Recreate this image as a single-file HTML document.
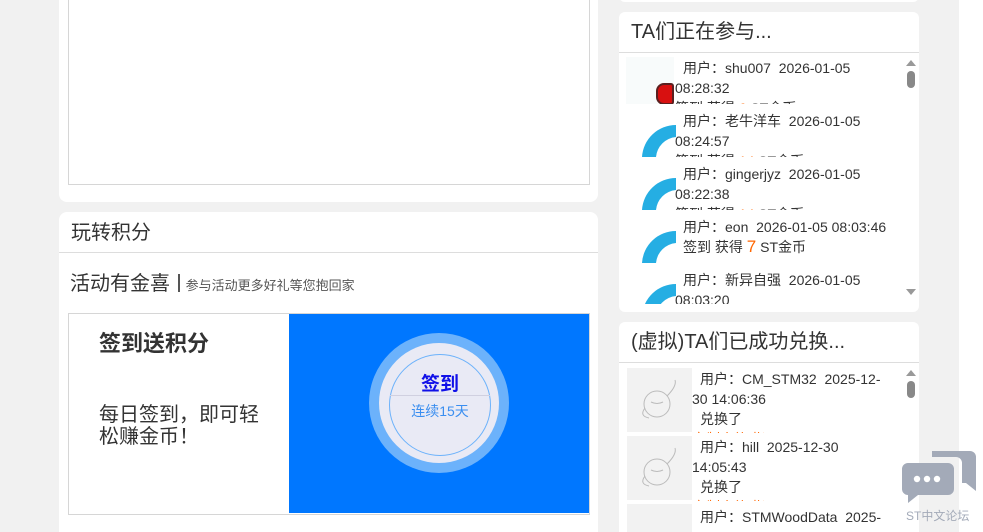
<!DOCTYPE html>
<html style="width:983px;height:532px;overflow:hidden"><head><meta charset="utf-8"><style>
*{margin:0;padding:0;box-sizing:border-box}
body{width:983px;height:532px;overflow:hidden;background:#fff;font-family:"Liberation Sans","Noto Sans CJK SC",sans-serif;color:#333;position:relative}
.bg{position:absolute;left:0;top:0;width:959px;height:532px;background:#f1f1f1}
.p{position:absolute;background:#fff;border-radius:8px}
.a{position:absolute}
.line{position:absolute;height:1px;background:#ddd}
.it{position:absolute;overflow:hidden;font-size:14px;line-height:20px;color:#333}
.it .t{position:absolute;text-indent:8px}
.o{color:#f60}
.sb{position:absolute;width:8px;background:#888;border-radius:4px}
.up{position:absolute;width:0;height:0;border-left:5px solid transparent;border-right:5px solid transparent;border-bottom:6px solid #999}
.dn{position:absolute;width:0;height:0;border-left:5px solid transparent;border-right:5px solid transparent;border-top:6px solid #999}
</style></head><body>
<div class="bg"></div>
<div class="p" style="left:59px;top:-10px;width:539px;height:212px"></div>
<div class="a" style="left:68px;top:-2px;width:522px;height:187px;border:1px solid #d6d6d6"></div>
<div class="p" style="left:59px;top:212px;width:539px;height:320px;border-radius:8px 8px 0 0"></div>
<div class="a" style="left:71px;top:221px;font-size:20px;line-height:24px;color:#333">玩转积分</div>
<div class="line" style="left:59px;top:252px;width:539px"></div>
<div class="a" style="left:70px;top:272px;font-size:20px;line-height:24px;color:#333">活动有金喜 <span style="display:inline-block;width:2px;height:18px;background:#555;vertical-align:-2px;margin:0 6px 0 2px"></span><span style="font-size:13px;color:#555">参与活动更多好礼等您抱回家</span></div>
<div class="a" style="left:68px;top:313px;width:522px;height:202px;border:1px solid #d6d6d6"></div>
<div class="a" style="left:289px;top:314px;width:300px;height:199px;background:#0077ff"></div>
<div class="a" style="left:99px;top:330px;font-size:22px;font-weight:bold;color:#333;line-height:28px">签到送积分</div>
<div class="a" style="left:99px;top:404px;width:170px;font-size:20px;line-height:22px;color:#333">每日签到，即可轻松赚金币！</div>
<div class="a" style="left:369px;top:333px;width:140px;height:140px;border-radius:50%;background:#6cb2fb"></div>
<div class="a" style="left:379px;top:343px;width:120px;height:120px;border-radius:50%;background:#e9eaf5"></div>
<div class="a" style="left:389px;top:354px;width:102px;height:102px;border-radius:50%;border:1px solid #6cb2fb"></div>
<div class="line" style="left:390px;top:395px;width:100px;background:#d0d0e0"></div>
<div class="a" style="left:389px;top:373px;width:102px;text-align:center;font-size:19px;font-weight:bold;color:#1010e8;line-height:24px">签到</div>
<div class="a" style="left:389px;top:401px;width:102px;text-align:center;font-size:14px;color:#3a8ef0;line-height:20px">连续15天</div>

<div class="p" style="left:619px;top:-10px;width:300px;height:12px;border-radius:0 0 6px 6px"></div>
<div class="p" style="left:619px;top:12px;width:300px;height:300px;border-radius:6px"></div>
<div class="a" style="left:631px;top:20px;font-size:20px;line-height:24px;color:#333">TA们正在参与...</div>
<div class="line" style="left:619px;top:52px;width:300px"></div>
<div class="up" style="left:906px;top:60px"></div>
<div class="sb" style="left:907px;top:71px;height:17px"></div>
<div class="dn" style="left:906px;top:289px"></div>

<div class="it" style="left:626px;top:57px;width:275px;height:47px">
<div class="a" style="left:0;top:0;width:48px;height:48px;background:#f8fbfb"></div>
<div class="a" style="left:30px;top:26px;width:18px;height:22px;border-radius:8px 3px 3px 8px;background:#d81010;border:2px solid #5a2020"></div>
<div class="t" style="left:49px;top:1px;width:226px">用户：shu007&nbsp; 2026-01-05 08:28:32<br>签到 获得 <span class="o">6</span> ST金币</div></div>

<div class="it" style="left:626px;top:110px;width:275px;height:47px">
<svg class="a" style="left:16px;top:15px" width="34" height="32"><path d="M0,32 A34,34 0 0 1 34,0 L34,12 A22,22 0 0 0 14,32 Z" fill="#25aee3"/></svg>
<div class="t" style="left:49px;top:1px;width:226px">用户：老牛洋车&nbsp; 2026-01-05 08:24:57<br>签到 获得 <span class="o">14</span> ST金币</div></div>

<div class="it" style="left:626px;top:163px;width:275px;height:47px">
<svg class="a" style="left:16px;top:15px" width="34" height="32"><path d="M0,32 A34,34 0 0 1 34,0 L34,12 A22,22 0 0 0 14,32 Z" fill="#25aee3"/></svg>
<div class="t" style="left:49px;top:1px;width:226px">用户：gingerjyz&nbsp; 2026-01-05 08:22:38<br>签到 获得 <span class="o">14</span> ST金币</div></div>

<div class="it" style="left:626px;top:216px;width:275px;height:47px">
<svg class="a" style="left:16px;top:15px" width="34" height="32"><path d="M0,32 A34,34 0 0 1 34,0 L34,12 A22,22 0 0 0 14,32 Z" fill="#25aee3"/></svg>
<div class="t" style="left:49px;top:1px;width:226px">用户：eon&nbsp; 2026-01-05 08:03:46<br><span style="padding-left:8px">签到 获得 <span class="o" style="font-size:17px">7</span> ST金币</span></div></div>

<div class="it" style="left:626px;top:269px;width:275px;height:35px">
<svg class="a" style="left:16px;top:15px" width="34" height="32"><path d="M0,32 A34,34 0 0 1 34,0 L34,12 A22,22 0 0 0 14,32 Z" fill="#25aee3"/></svg>
<div class="t" style="left:49px;top:1px;width:226px">用户：新异自强&nbsp; 2026-01-05 08:03:20</div></div>

<div class="p" style="left:619px;top:322px;width:300px;height:210px;border-radius:6px 6px 0 0"></div>
<div class="a" style="left:631px;top:330px;font-size:20px;line-height:24px;color:#333">(虚拟)TA们已成功兑换...</div>
<div class="line" style="left:619px;top:362px;width:300px"></div>
<div class="up" style="left:906px;top:370px"></div>
<div class="sb" style="left:907px;top:381px;height:17px"></div>

<div class="it" style="left:627px;top:368px;width:270px;height:65px">
<div class="a" style="left:0;top:0;width:65px;height:64px;background:#f2f2f2"></div>
<svg class="a" style="left:10px;top:10px" width="45" height="45"><circle cx="20" cy="26" r="13" fill="none" stroke="#bbb"/><path d="M30,18 Q40,8 38,2 M8,30 Q2,38 12,40 M14,24 q6,3 12,0" fill="none" stroke="#bbb"/></svg>
<div class="t" style="left:65px;top:1px;width:200px">用户：CM_STM32&nbsp; 2025-12-30 14:06:36<br><span style="padding-left:8px">兑换了</span><br><span class="o">定制小礼 指甲800</span></div></div>

<div class="it" style="left:627px;top:436px;width:270px;height:65px">
<div class="a" style="left:0;top:0;width:65px;height:64px;background:#f2f2f2"></div>
<svg class="a" style="left:10px;top:10px" width="45" height="45"><circle cx="20" cy="26" r="13" fill="none" stroke="#bbb"/><path d="M30,18 Q40,8 38,2 M8,30 Q2,38 12,40 M14,24 q6,3 12,0" fill="none" stroke="#bbb"/></svg>
<div class="t" style="left:65px;top:1px;width:200px">用户：hill&nbsp; 2025-12-30 14:05:43<br><span style="padding-left:8px">兑换了</span><br><span class="o">定制小礼 指甲800</span></div></div>

<div class="it" style="left:627px;top:504px;width:270px;height:28px">
<div class="a" style="left:0;top:0;width:65px;height:64px;background:#f2f2f2"></div>
<div class="t" style="left:65px;top:3px;width:200px">用户：STMWoodData&nbsp; 2025-12-30</div></div>

<svg class="a" style="left:902px;top:447px" width="76" height="60">
<path d="M30,4 h38 a6,6 0 0 1 6,6 v34 l-10,-8 h-4 v-20 a6,6 0 0 0 -6,-6 h-24 z" fill="#a3aab8"/>
<path d="M6,16 h40 a6,6 0 0 1 6,6 v20 a6,6 0 0 1 -6,6 h-30 l-10,8 v-8 a6,6 0 0 1 -6,-6 v-20 a6,6 0 0 1 6,-6z" fill="#a3aab8"/>
<circle cx="15" cy="32" r="3.2" fill="#fff"/><circle cx="25" cy="32" r="3.2" fill="#fff"/><circle cx="35" cy="32" r="3.2" fill="#fff"/>
</svg>
<div class="a" style="left:906px;top:508px;font-size:12px;color:#a3aab8;line-height:16px">ST中文论坛</div>
</body></html>
